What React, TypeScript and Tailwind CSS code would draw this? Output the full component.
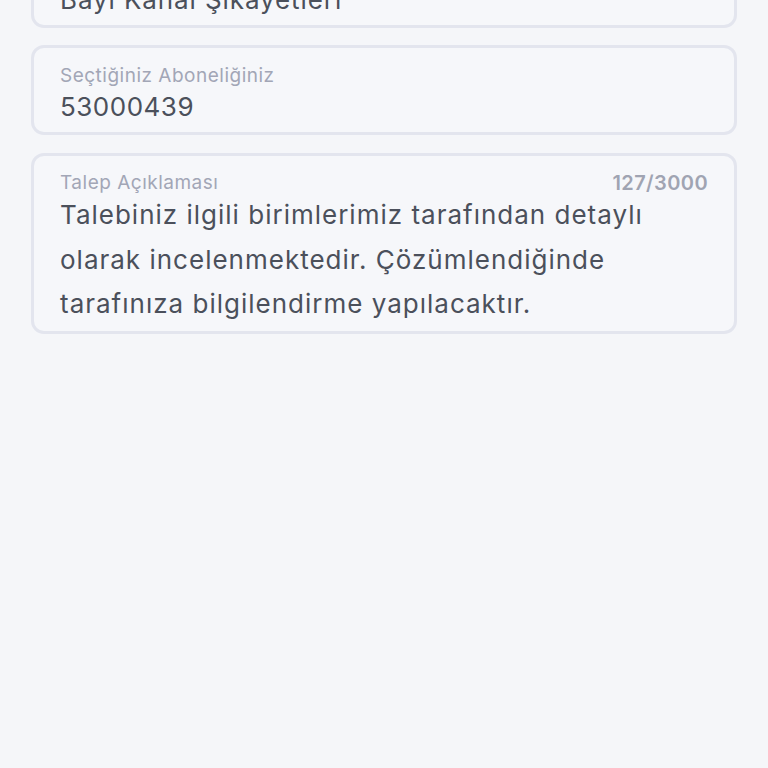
export default function App() {
  const aciklama =
    'Talebiniz ilgili birimlerimiz tarafından detaylı olarak incelenmektedir. Çözümlendiğinde tarafınıza bilgilendirme yapılacaktır.';

  return (
    <div
      className="min-h-screen bg-[#f5f6f9] overflow-hidden"
      style={{ fontFamily: 'Inter, "Noto Sans", sans-serif' }}
    >
      <div className="px-[31px] flex flex-col gap-[17px] -mt-[62px]">
        <div className="h-[90px] rounded-[13px] border-[3px] border-[#e3e5ee] bg-[#f6f7fa] px-[26px] pt-[14px]">
          <p className="text-[19px] leading-[28px] tracking-[0.4px] text-[#a2a6b6]">Başvuru Konusu</p>
          <p className="text-[26px] leading-[34px] tracking-[0.9px] text-[#4b505b]">Bayi Kanal Şikayetleri</p>
        </div>

        <div className="h-[90px] rounded-[13px] border-[3px] border-[#e3e5ee] bg-[#f6f7fa] px-[26px] pt-[14px]">
          <p className="text-[19px] leading-[28px] tracking-[0.5px] text-[#a2a6b6]">Seçtiğiniz Aboneliğiniz</p>
          <p className="text-[26px] leading-[34px] tracking-[0.5px] text-[#4b505b]">53000439</p>
        </div>

        <div className="mt-[1px] rounded-[13px] border-[3px] border-[#e3e5ee] bg-[#f6f7fa] px-[26px] pt-[17px] pb-[4px]">
          <div className="flex items-center justify-between h-[20px]">
            <p className="text-[19px] leading-[20px] tracking-[0.5px] text-[#a2a6b6]">Talep Açıklaması</p>
            <p className="text-[20px] leading-[20px] font-semibold tracking-[0.4px] text-[#a0a4b2]">127/3000</p>
          </div>
          <p className="text-[26px] leading-[44.5px] tracking-[1px] text-[#4b505b]">{aciklama}</p>
        </div>
      </div>
    </div>
  );
}
